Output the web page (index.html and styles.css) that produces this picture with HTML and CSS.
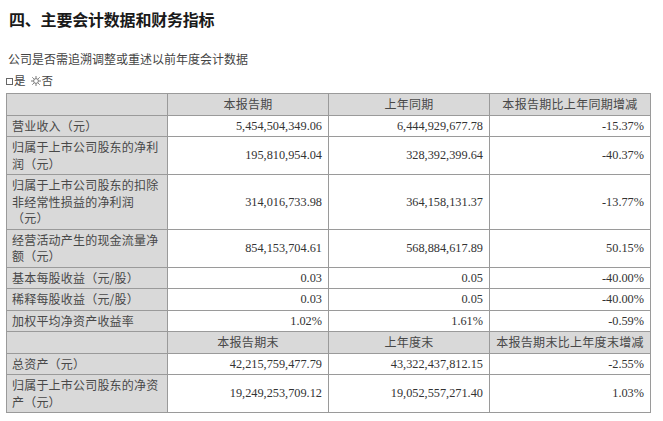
FILE: index.html
```html
<!DOCTYPE html>
<html lang="zh-CN">
<head>
<meta charset="utf-8">
<title>主要会计数据和财务指标</title>
<link rel="stylesheet" href="styles.css">
</head>
<body>
<div class="page">
  <h1 class="title">四、主要会计数据和财务指标</h1>
  <p class="desc">公司是否需追溯调整或重述以前年度会计数据</p>
  <p class="choice"><span class="box"></span>是 <svg class="sun" viewBox="0 0 10 10" width="10" height="10"><circle cx="5" cy="5" r="2.4" fill="none" stroke="#555" stroke-width="0.8"/><g stroke="#555" stroke-width="0.8" stroke-linecap="round"><line x1="5" y1="0.4" x2="5" y2="1.8"/><line x1="5" y1="8.2" x2="5" y2="9.6"/><line x1="0.4" y1="5" x2="1.8" y2="5"/><line x1="8.2" y1="5" x2="9.6" y2="5"/><line x1="1.6" y1="1.6" x2="2.6" y2="2.6"/><line x1="7.4" y1="7.4" x2="8.4" y2="8.4"/><line x1="8.4" y1="1.6" x2="7.4" y2="2.6"/><line x1="1.6" y1="8.4" x2="2.6" y2="7.4"/></g></svg>否</p>
  <table class="data">
    <colgroup><col class="c1"><col class="c2"><col class="c3"><col class="c4"></colgroup>
    <tr class="head"><td class="label"></td><td>本报告期</td><td>上年同期</td><td>本报告期比上年同期增减</td></tr>
    <tr><td class="label">营业收入（元）</td><td class="num">5,454,504,349.06</td><td class="num">6,444,929,677.78</td><td class="num">-15.37%</td></tr>
    <tr><td class="label">归属于上市公司股东的净利<br>润（元）</td><td class="num">195,810,954.04</td><td class="num">328,392,399.64</td><td class="num">-40.37%</td></tr>
    <tr><td class="label">归属于上市公司股东的扣除<br>非经常性损益的净利润<br>（元）</td><td class="num">314,016,733.98</td><td class="num">364,158,131.37</td><td class="num">-13.77%</td></tr>
    <tr><td class="label">经营活动产生的现金流量净<br>额（元）</td><td class="num">854,153,704.61</td><td class="num">568,884,617.89</td><td class="num">50.15%</td></tr>
    <tr><td class="label">基本每股收益（元/股）</td><td class="num">0.03</td><td class="num">0.05</td><td class="num">-40.00%</td></tr>
    <tr><td class="label">稀释每股收益（元/股）</td><td class="num">0.03</td><td class="num">0.05</td><td class="num">-40.00%</td></tr>
    <tr><td class="label">加权平均净资产收益率</td><td class="num">1.02%</td><td class="num">1.61%</td><td class="num">-0.59%</td></tr>
    <tr class="head"><td class="label"></td><td>本报告期末</td><td>上年度末</td><td>本报告期末比上年度末增减</td></tr>
    <tr><td class="label">总资产（元）</td><td class="num">42,215,759,477.79</td><td class="num">43,322,437,812.15</td><td class="num">-2.55%</td></tr>
    <tr><td class="label">归属于上市公司股东的净资<br>产（元）</td><td class="num">19,249,253,709.12</td><td class="num">19,052,557,271.40</td><td class="num">1.03%</td></tr>
  </table>
</div>
</body>
</html>
```

FILE: styles.css
```css
html, body {
  margin: 0;
  padding: 0;
  background: #ffffff;
}

.page {
  padding: 8px 0 0 6px;
  font-family: "Liberation Serif", "Noto Sans CJK SC", serif;
  color: #333333;
}

.title {
  margin: 0 0 0 3px;
  font-family: "Noto Sans CJK SC", sans-serif;
  font-size: 16px;
  font-weight: 700;
  line-height: 22px;
  color: #1a1a1a;
  letter-spacing: -0.2px;
}

.desc {
  margin: 20px 0 0 2px;
  font-family: "Noto Sans CJK SC", sans-serif;
  font-size: 12px;
  line-height: 18px;
  color: #444444;
}

.choice {
  margin: 3px 0 0 0;
  font-family: "Noto Sans CJK SC", sans-serif;
  font-size: 11.5px;
  line-height: 18px;
  color: #444444;
  display: flex;
  align-items: center;
}

.box {
  display: inline-block;
  width: 5px;
  height: 5px;
  border: 1px solid #666666;
  margin: 3px 1px 0 0;
}

.sun {
  margin: 1px 1px 0 5px;
}

.data {
  margin-top: 4px;
  border-collapse: collapse;
  table-layout: fixed;
  width: 644px;
  font-size: 12.3px;
}

.c1 { width: 161px; }
.c2 { width: 161px; }
.c3 { width: 161px; }
.c4 { width: 161px; }

.data td {
  border: 1px solid #9a9a9a;
  padding: 2px 6px 2px 6px;
  line-height: 16.5px;
  vertical-align: middle;
  color: #333333;
}

.data .label {
  background: #d9d9d9;
  font-family: "Noto Sans CJK SC", sans-serif;
  font-size: 12px;
  letter-spacing: 0.2px;
  padding-left: 5px;
  text-align: left;
  color: #484848;
}

.data .head td {
  background: #d9d9d9;
  text-align: center;
  font-family: "Noto Sans CJK SC", sans-serif;
  font-size: 12px;
  letter-spacing: 0.3px;
  color: #484848;
}

.data .num {
  text-align: right;
  font-family: "Liberation Serif", serif;
}
```
